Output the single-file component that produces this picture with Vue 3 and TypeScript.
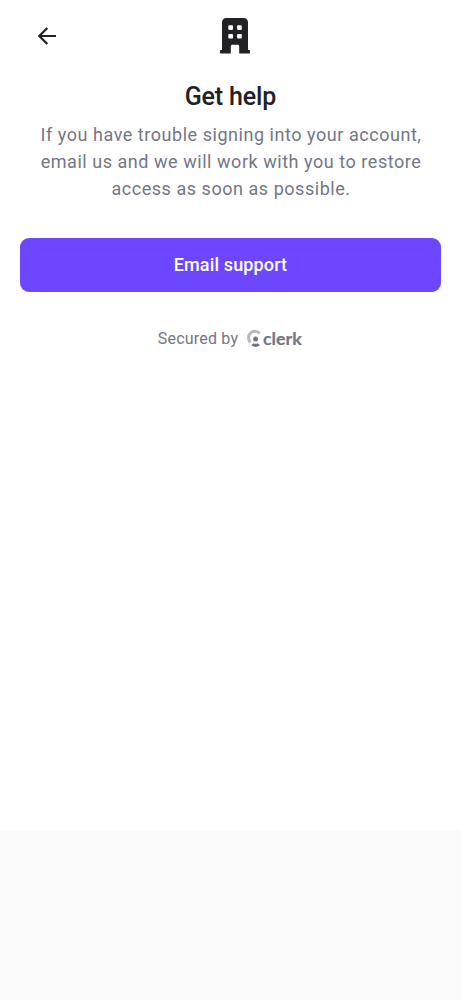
<script setup lang="ts">
const messageLines: string[] = [
  'If you have trouble signing into your account,',
  'email us and we will work with you to restore',
  'access as soon as possible.',
]
</script>

<template>
  <div class="screen">
    <main class="sheet">
      <header class="bar">
        <button class="back" aria-label="Back">
          <svg width="20" height="20" viewBox="0 0 20 20">
            <path d="M19 10H2.500M10.300 2L2.300 10l8 8" fill="none" stroke="#212126" stroke-width="2.200" />
          </svg>
        </button>
        <svg class="logo" width="30" height="36" viewBox="0 0 30 36">
          <path
            fill="#212126"
            fill-rule="evenodd"
            d="M6.200 0h17.600C26.200 0 28 1.800 28 4.200V32h1c.6 0 1 .4 1 1v1.500c0 .6-.4 1-1 1H19.200V28.200c0-.9-.7-1.500-1.500-1.500h-5.400c-.9 0-1.500.7-1.500 1.500V35.500H1c-.6 0-1-.4-1-1V33c0-.6.4-1 1-1h1V4.200C2 1.800 3.800 0 6.200 0ZM9.400 7.200c-.7 0-1.100.5-1.100 1.100v2.500c0 .7.5 1.100 1.100 1.100h2.500c.7 0 1.100-.5 1.100-1.100V8.300c0-.7-.5-1.100-1.100-1.100Zm8.800 0c-.7 0-1.100.5-1.100 1.100v2.500c0 .7.5 1.100 1.100 1.100h2.500c.7 0 1.100-.5 1.100-1.100V8.300c0-.7-.5-1.100-1.100-1.100Zm-8.800 8.700c-.7 0-1.100.5-1.100 1.100v2.500c0 .7.5 1.100 1.100 1.100h2.500c.7 0 1.100-.5 1.100-1.100V17c0-.7-.5-1.100-1.100-1.100Zm8.800 0c-.7 0-1.100.5-1.100 1.100v2.500c0 .7.5 1.100 1.100 1.100h2.500c.7 0 1.100-.5 1.100-1.100V17c0-.7-.5-1.100-1.100-1.100Z"
          />
        </svg>
      </header>
      <h1 class="title">Get help</h1>
      <p class="message">
        <span v-for="line in messageLines" :key="line" class="line">{{ line }}</span>
      </p>
      <button class="primary">Email support</button>
      <footer class="secured">
        <span class="by">Secured by</span>
        <svg class="clerk" width="56" height="26" viewBox="0 -4 56 26">
          <path d="M12.800 3.300A6.500 6.500 0 0 0 3.400 12.400" fill="none" stroke="#b9b9c1" stroke-width="3.100" />
          <circle cx="8.600" cy="9" r="2.500" fill="#747686" />
          <path d="M4.400 15.300L6.400 13.300Q8.600 14.400 10.900 13.300L13 15.300Q8.700 18.500 4.400 15.300Z" fill="#747686" />
          <text x="16" y="15.200" class="wordmark" textLength="38.800" lengthAdjust="spacingAndGlyphs">clerk</text>
        </svg>
      </footer>
    </main>
  </div>
</template>

<style>
body {
  background: #fafafa;
}
</style>

<style scoped>
.screen {
  min-height: 1000px;
  background: #fafafa;
  font-family: Roboto, sans-serif;
}
.sheet {
  box-sizing: border-box;
  height: 830px;
  padding: 18px 20px 0;
  background: #fff;
}
.bar {
  display: grid;
  grid-template-columns: 200px 30px 1fr;
  height: 36px;
  align-items: center;
}
.back {
  justify-self: start;
  width: 20px;
  height: 20px;
  margin-left: 17px;
  padding: 0;
  border: 0;
  background: none;
}
.back svg,
.logo,
.clerk {
  display: block;
}
.title {
  margin: 27px 0 0;
  font-size: 25px;
  letter-spacing: -0.14px;
  line-height: 32px;
  font-weight: 500;
  color: #212126;
  text-align: center;
}
.message {
  margin: 8px 0 0;
  font-size: 18px;
  line-height: 27px;
  letter-spacing: 0.54px;
  color: #747686;
  text-align: center;
}
.line {
  display: block;
  padding-left: 1px;
  white-space: nowrap;
}
.primary {
  display: block;
  width: 100%;
  height: 54px;
  margin-top: 36px;
  padding: 0;
  border: 0;
  border-radius: 9px;
  background: #6c47ff;
  color: #fff;
  font: 500 18px/54px Roboto, sans-serif;
  letter-spacing: 0.14px;
}
.secured {
  display: flex;
  justify-content: center;
  align-items: center;
  gap: 9px;
  height: 20px;
  margin-top: 37px;
}
.by {
  font-size: 16px;
  line-height: 20px;
  letter-spacing: 0.2px;
  color: #747686;
}
.wordmark {
  font-family: Lato, sans-serif;
  font-size: 17.500px;
  font-weight: 700;
  fill: #747686;
  stroke: #747686;
  stroke-width: 0.2px;
}
</style>
